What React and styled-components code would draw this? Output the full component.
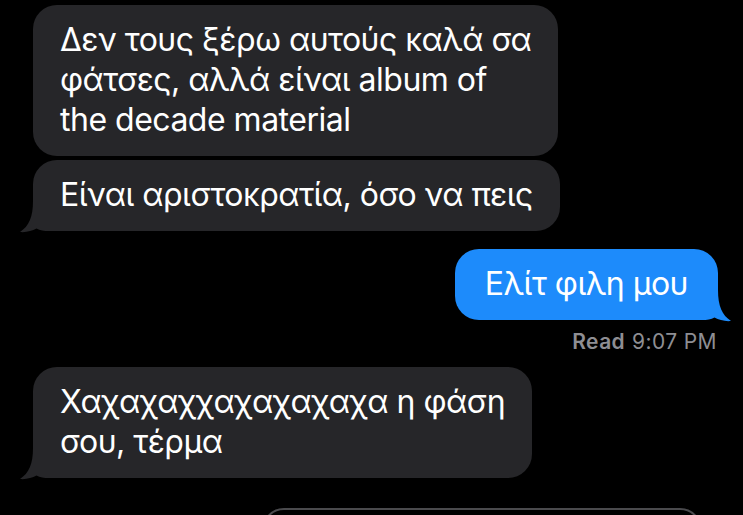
import React from 'react'
import styled, { createGlobalStyle } from 'styled-components'

const GlobalStyle = createGlobalStyle`
  html, body {
    margin: 0;
    padding: 0;
    background: #000;
  }
`

const Screen = styled.div`
  width: 743px;
  height: 515px;
  overflow: hidden;
  background: #000;
  display: flex;
  flex-direction: column;
  padding-top: 5px;
  box-sizing: border-box;
  font-family: Inter, "Noto Sans", sans-serif;
  -webkit-font-smoothing: antialiased;
`

const Row = styled.div`
  display: flex;
  justify-content: ${p => (p.$out ? 'flex-end' : 'flex-start')};
  padding: ${p => (p.$out ? '0 25px 0 0' : '0 0 0 33px')};
  margin-top: ${p => p.$gap || 0}px;
`

const Bubble = styled.div`
  position: relative;
  max-width: 524px;
  padding: 15px ${p => (p.$out ? 30 : 27)}px 16px;
  border-radius: 24px;
  background: ${p => (p.$out ? '#1d8bfb' : '#262629')};
  color: #fff;
  font-size: 32px;
  line-height: 40px;
  letter-spacing: -0.5px;
  white-space: nowrap;
`

const Tail = styled.svg`
  position: absolute;
  bottom: -2px;
  width: 40px;
  height: 36px;
  ${p => (p.$out ? 'right: -14px; transform: scaleX(-1);' : 'left: -14px;')}
`

const Receipt = styled.div`
  display: flex;
  justify-content: flex-end;
  gap: 7px;
  padding-right: 26px;
  margin-top: 9px;
  font-size: 21px;
  line-height: 25px;
  letter-spacing: 0.4px;
  color: #8e8e93;
`

const Strong = styled.span`
  font-weight: 600;
`

const Composer = styled.div`
  margin: 30px 0 0 262px;
  width: 440px;
  height: 44px;
  flex-shrink: 0;
  border: 2px solid #4a4a4d;
  border-radius: 22px;
  box-sizing: border-box;
`

function BubbleTail({ out }) {
  return (
    <Tail $out={out} viewBox="0 0 40 36">
      <path
        d="M14 4 C14 20 10 29 1 35 C7 35.6 13 34 17.5 31.5 C21 33.5 25 34 30 34 L40 34 L40 4 Z"
        fill={out ? '#1d8bfb' : '#262629'}
      />
    </Tail>
  )
}

function Message({ out, tail, gap, children }) {
  return (
    <Row $out={out} $gap={gap}>
      <Bubble $out={out}>
        {children}
        {tail && <BubbleTail out={out} />}
      </Bubble>
    </Row>
  )
}

export default function App() {
  return (
    <>
      <GlobalStyle />
      <Screen>
        <Message>
          Δεν τους ξέρω αυτούς καλά σα<br />
          φάτσες, αλλά είναι album of<br />
          the decade material
        </Message>
        <Message tail gap={4}>Είναι αριστοκρατία, όσο να πεις</Message>
        <Message out tail gap={18}>Ελίτ φιλη μου</Message>
        <Receipt>
          <Strong>Read</Strong>
          <span>9:07 PM</span>
        </Receipt>
        <Message tail gap={13}>
          Χαχαχαχχαχαχαχαχα η φάση<br />
          σου, τέρμα
        </Message>
        <Composer />
      </Screen>
    </>
  )
}
